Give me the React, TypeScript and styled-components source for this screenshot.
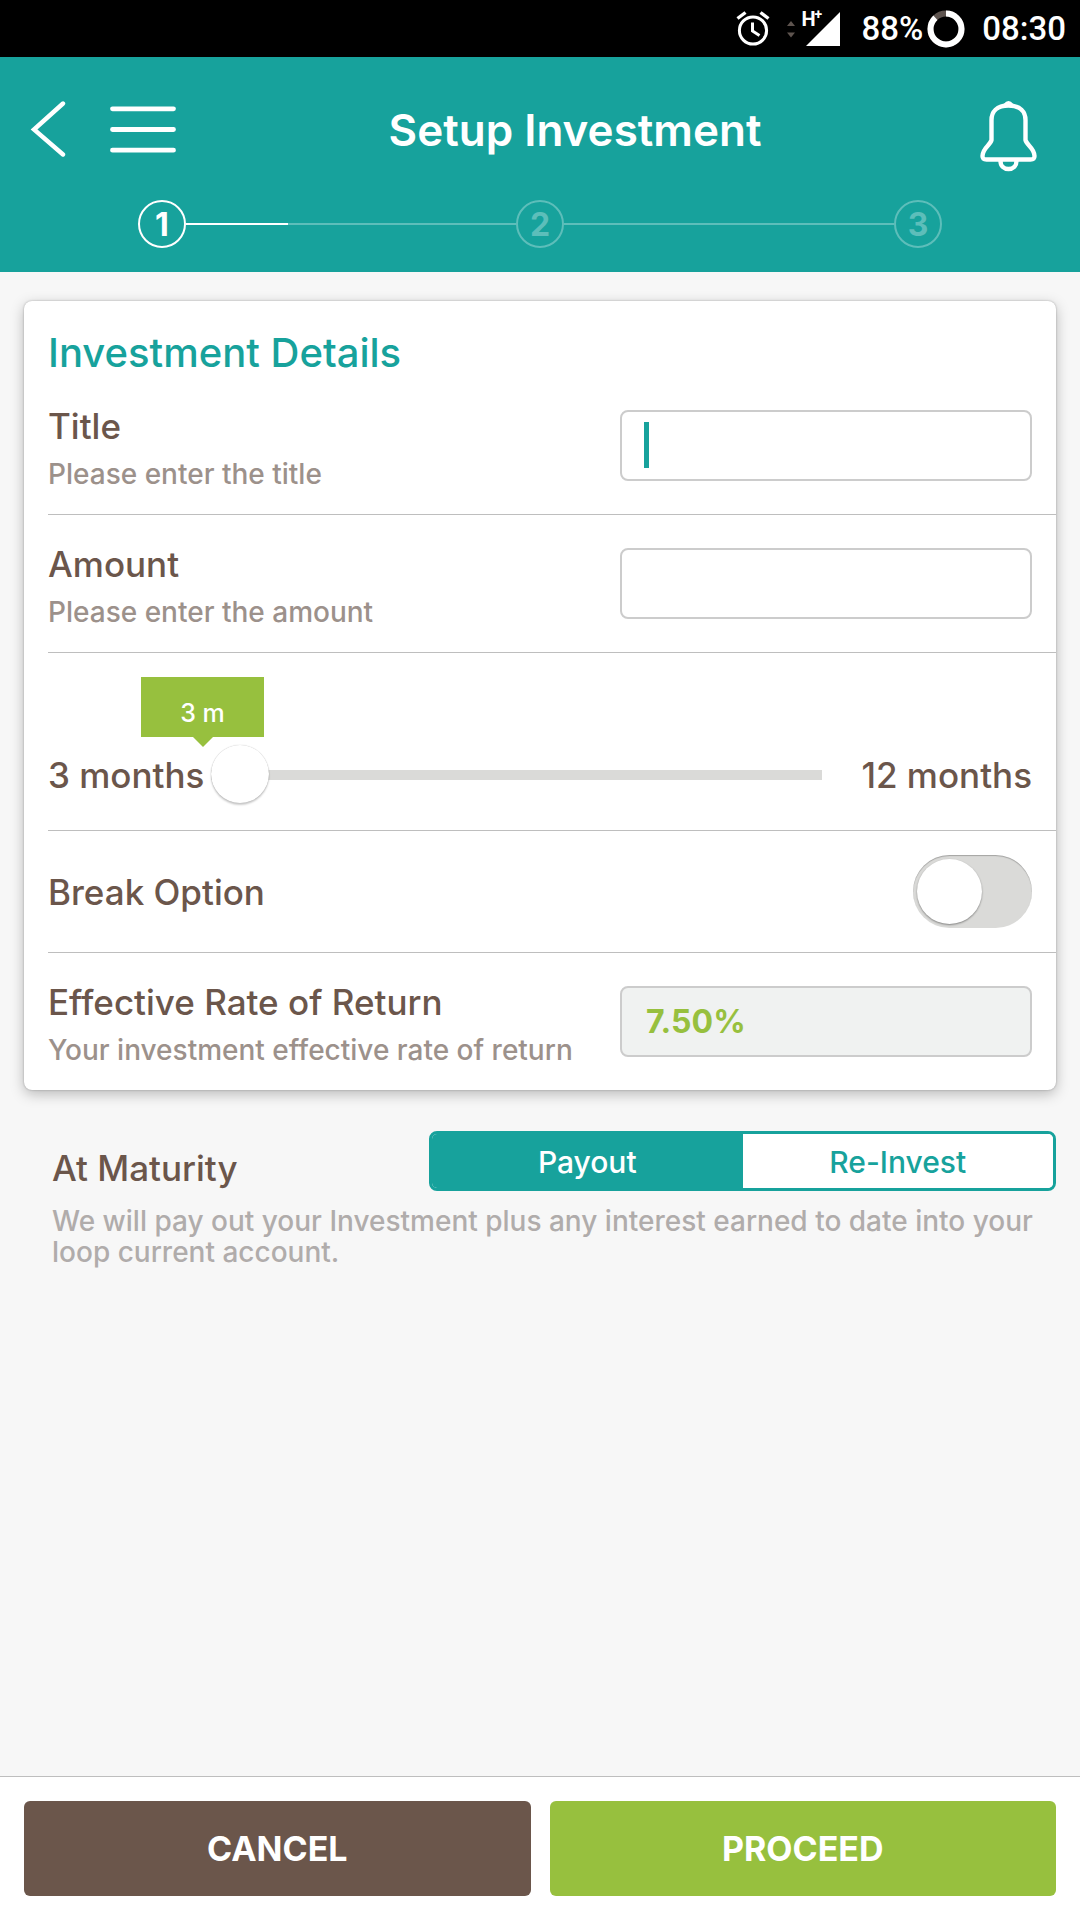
import React, { useState } from "react";
import styled, { createGlobalStyle } from "styled-components";

const teal = "#17a29c";
const green = "#97c03e";
const brown = "#6b564b";
const rule = "#bebebe";

const GlobalStyle = createGlobalStyle`
  *, *::before, *::after { box-sizing: border-box; }
  body { margin: 0; background: #f7f7f7; }
  body, button, input { font-family: Inter, "Liberation Sans", sans-serif; }
  button { border: 0; padding: 0; background: none; cursor: pointer; }
`;

const Page = styled.div`
  display: flex;
  flex-direction: column;
  min-height: 100vh;
  color: ${brown};
`;

const StatusBar = styled.div`
  display: flex;
  align-items: center;
  justify-content: flex-end;
  height: 57px;
  padding-right: 14px;
  background: #000;
  color: #fff;
  font: 500 33px/40px Roboto, sans-serif;
`;

const StatusIcon = styled.svg<{ $gap: number }>`
  display: block;
  flex: none;
  margin-right: ${(p) => p.$gap}px;
`;

const Signal = styled.div`
  position: relative;
  margin-right: 20px;
  svg { display: block; }
`;

const SignalType = styled.span`
  position: absolute;
  left: -4px;
  top: -2px;
  font: 700 20px/20px Roboto, sans-serif;
  sup { position: absolute; left: 13px; top: -4px; font-size: 14px; line-height: 18px; }
`;

const Battery = styled.span`
  margin-right: 4px;
`;

const Header = styled.header`
  background: ${teal};
  color: #fff;
  padding-bottom: 24px;
`;

const TitleBar = styled.div`
  display: flex;
  align-items: center;
  height: 143px;
  padding: 0 40px 0 30px;
`;

const IconButton = styled.button<{ $gap?: number; $drop?: number }>`
  flex: none;
  margin-right: ${(p) => p.$gap ?? 0}px;
  padding-top: ${(p) => p.$drop ?? 0}px;
  svg { display: block; fill: none; stroke: #fff; stroke-linecap: round; stroke-linejoin: round; }
`;

const PageTitle = styled.h1`
  flex: 1;
  margin: 0;
  padding-top: 2px;
  text-align: center;
  font-size: 44px;
  line-height: 52px;
  font-weight: 600;
`;

const Steps = styled.ol`
  display: flex;
  align-items: center;
  margin: 0;
  padding: 0 138px;
  list-style: none;
`;

const Step = styled.li<{ $active?: boolean }>`
  display: flex;
  align-items: center;
  justify-content: center;
  flex: none;
  width: 48px;
  height: 48px;
  padding-top: 2px;
  border: 2px solid currentColor;
  border-radius: 50%;
  color: ${(p) => (p.$active ? "#fff" : "#5dbeba")};
  font-size: 32px;
  line-height: 40px;
  font-weight: 700;
`;

const Connector = styled.li<{ $done?: number }>`
  flex: 1;
  height: 2px;
  background: #5dbeba;
  &::before {
    content: "";
    display: block;
    width: ${(p) => p.$done ?? 0}%;
    height: 2px;
    background: #fff;
  }
`;

const Main = styled.main`
  flex: 1;
  padding: 29px 24px;
`;

const Card = styled.section`
  padding: 28px 0 0 24px;
  background: #fff;
  border-radius: 8px;
  box-shadow: 0 0 2px rgba(0, 0, 0, 0.3), 0 4px 14px rgba(0, 0, 0, 0.26);
`;

const CardTitle = styled.h2`
  margin: 0;
  color: ${teal};
  font-size: 40px;
  line-height: 48px;
  font-weight: 500;
`;

const Row = styled.div<{ $height: number }>`
  display: flex;
  align-items: center;
  justify-content: space-between;
  min-height: ${(p) => p.$height}px;
  padding-right: 24px;
  border-bottom: 1px solid ${rule};
  &:last-child { border-bottom: 0; }
`;

const Texts = styled.div`
  padding-top: 8px;
`;

const Label = styled.label`
  display: block;
  font-size: 35px;
  line-height: 40px;
  font-weight: 500;
`;

const Hint = styled.p`
  margin: 8px 0 0;
  color: #9c918b;
  font-size: 28px;
  line-height: 40px;
  font-weight: 500;
`;

const Field = styled.div`
  position: relative;
  flex: none;
  width: 40%;
  min-width: 412px;
  max-width: 412px;
`;

const TextBox = styled.input`
  display: block;
  width: 100%;
  height: 71px;
  padding: 0 24px;
  border: 2px solid #ccc;
  border-radius: 8px;
  background: #fff;
  color: ${green};
  font-size: 32px;
  font-weight: 700;
  outline: 0;
  caret-color: ${teal};
  &:read-only { background: #f0f2f1; }
`;

const Caret = styled.span`
  position: absolute;
  left: 24px;
  top: 12px;
  width: 5px;
  height: 46px;
  background: ${teal};
`;

const SliderRow = styled(Row)`
  display: grid;
  grid-template-columns: 163px 1fr 210px;
  align-items: center;
  padding-top: 67px;
`;

const EndLabel = styled(Label)`
  text-align: right;
`;

const SliderBox = styled.div`
  position: relative;
`;

const Slider = styled.input`
  appearance: none;
  display: block;
  width: 100%;
  height: 60px;
  margin: 0;
  background: transparent;
  &::-webkit-slider-runnable-track { height: 10px; background: #dadad8; }
  &::-webkit-slider-thumb {
    appearance: none;
    width: 58px;
    height: 58px;
    margin-top: -25px;
    border-radius: 50%;
    background: #fff;
    box-shadow: 0 0 1px rgba(0, 0, 0, 0.3), 0 2px 2px rgba(0, 0, 0, 0.2);
  }
`;

const Bubble = styled.output`
  position: absolute;
  bottom: 68px;
  width: 123px;
  height: 60px;
  margin-left: -70px;
  padding-top: 12px;
  background: ${green};
  color: #fff;
  text-align: center;
  font-size: 25px;
  line-height: 48px;
  font-weight: 500;
  &::after {
    content: "";
    position: absolute;
    left: 50%;
    top: 100%;
    margin-left: -10px;
    border: 10px solid transparent;
    border-top-color: ${green};
    border-bottom: 0;
  }
`;

const Toggle = styled.input`
  appearance: none;
  width: 119px;
  height: 73px;
  margin: 0;
  padding: 4px;
  border-radius: 37px;
  background: #dadad8;
  box-shadow: inset 0 1px 1px rgba(0, 0, 0, 0.25);
  &::before {
    content: "";
    display: block;
    width: 65px;
    height: 65px;
    border-radius: 50%;
    background: #fff;
    box-shadow: 0 1px 2px rgba(0, 0, 0, 0.4);
  }
  &:checked { background: ${teal}; }
  &:checked::before { margin-left: auto; }
`;

const Maturity = styled.section`
  padding: 41px 0 0 28px;
`;

const MaturityHead = styled.div`
  display: flex;
  align-items: flex-end;
  justify-content: space-between;
`;

const MaturityTitle = styled.h3`
  margin: 0;
  font-size: 35px;
  line-height: 46px;
  font-weight: 500;
`;

const Segments = styled.div`
  display: flex;
  width: 627px;
  border: 3px solid ${teal};
  border-radius: 8px;
  background: #fff;
  overflow: hidden;
`;

const Segment = styled.button<{ $on: boolean }>`
  flex: 1;
  height: 54px;
  padding-top: 2px;
  background: ${(p) => (p.$on ? teal : "#fff")};
  color: ${(p) => (p.$on ? "#fff" : teal)};
  font-size: 30px;
  line-height: 40px;
  font-weight: 500;
`;

const MaturityNote = styled.p`
  margin: 15px 8px 0 0;
  color: #b0acab;
  font-size: 28px;
  line-height: 31px;
  font-weight: 500;
`;

const Footer = styled.footer`
  display: flex;
  gap: 19px;
  padding: 24px;
  border-top: 1px solid ${rule};
  background: #fff;
`;

const Action = styled.button<{ $color: string }>`
  flex: 1;
  height: 95px;
  border-radius: 6px;
  background: ${(p) => p.$color};
  color: #fff;
  font-size: 34px;
  line-height: 44px;
  font-weight: 700;
`;

const notes: Record<string, string> = {
  Payout:
    "We will pay out your Investment plus any interest earned to date into your loop current account.",
  "Re-Invest":
    "We will re-invest your Investment plus any interest earned to date.",
};

export default function App() {
  const [months, setMonths] = useState(3);
  const [maturity, setMaturity] = useState("Payout");
  const ratio = (months - 3) / 9;

  return (
    <Page>
      <GlobalStyle />
      <StatusBar>
        <StatusIcon $gap={17} width="34" height="36" viewBox="0 0 34 36" fill="none" stroke="#fff" strokeWidth="3">
          <circle cx="17" cy="19.5" r="13.6" />
          <path d="M16.5 11.500v8.500l7 4.500" />
          <path d="M1.500 7.500l8-6M32.500 7.500l-8-6" strokeWidth="3.400" />
        </StatusIcon>
        <StatusIcon $gap={10} width="8" height="36" viewBox="0 0 8 36" fill="#5e544f">
          <path d="M0 15l4-5 4 5zM0 21.500h8l-4 5z" />
        </StatusIcon>
        <Signal>
          <SignalType>H<sup>+</sup></SignalType>
          <svg width="36" height="36" viewBox="0 0 36 36">
            <path d="M35 1v34H1z" fill="#fff" />
          </svg>
        </Signal>
        <Battery>88%</Battery>
        <StatusIcon $gap={17} width="38" height="38" viewBox="0 0 38 38" fill="none" strokeWidth="6">
          <circle cx="19" cy="19" r="15.500" stroke="#5e544f" />
          <circle cx="19" cy="19" r="15.500" stroke="#fff" pathLength="100" strokeDasharray="88 12" transform="rotate(-90 19 19)" />
        </StatusIcon>
        <span>08:30</span>
      </StatusBar>

      <Header>
        <TitleBar>
          <IconButton $gap={42} aria-label="Back">
            <svg width="36" height="58" viewBox="0 0 36 58" strokeWidth="4.400">
              <path d="M33 3.500L4 29.500L33 54.500" strokeLinejoin="miter" />
            </svg>
          </IconButton>
          <IconButton aria-label="Menu">
            <svg width="70" height="50" viewBox="0 0 70 50" strokeWidth="4.800">
              <path d="M4.500 4.800h61M4.500 25.500h61M4.500 46.200h61" />
            </svg>
          </IconButton>
          <PageTitle>Setup Investment</PageTitle>
          <IconButton aria-label="Notifications" $drop={14}>
            <svg width="68" height="74" viewBox="0 0 68 74" strokeWidth="4.400">
              <path d="M36.500 6.500C24.500 6.500 19.500 13 19.500 21V41C18.500 46 10.500 49 10.500 57C10.500 60 12 60.500 14.500 60.500H58.500C61 60.500 62.500 60 62.500 57C62.500 49 54.500 46 53.500 41V21C53.500 13 48.500 6.500 36.500 6.500Z" />
              <path d="M28.500 62C28.500 67 32 70 36.500 70S44.500 67 44.500 62" />
              <path d="M32.500 5.500Q36.500 0.500 40.500 5.500Z" fill="#fff" strokeWidth="2" />
            </svg>
          </IconButton>
        </TitleBar>
        <Steps>
          <Step $active>1</Step>
          <Connector $done={31} aria-hidden />
          <Step>2</Step>
          <Connector aria-hidden />
          <Step>3</Step>
        </Steps>
      </Header>

      <Main>
        <Card>
          <CardTitle>Investment Details</CardTitle>
          <Row $height={138}>
            <Texts>
              <Label htmlFor="title">Title</Label>
              <Hint>Please enter the title</Hint>
            </Texts>
            <Field>
              <TextBox id="title" />
              <Caret />
            </Field>
          </Row>
          <Row $height={138}>
            <Texts>
              <Label htmlFor="amount">Amount</Label>
              <Hint>Please enter the amount</Hint>
            </Texts>
            <Field>
              <TextBox id="amount" inputMode="decimal" />
            </Field>
          </Row>
          <SliderRow $height={178}>
            <Label htmlFor="months">3 months</Label>
            <SliderBox>
              <Slider
                id="months"
                type="range"
                min={3}
                max={12}
                value={months}
                onChange={(e) => setMonths(Number(e.target.value))}
              />
              <Bubble htmlFor="months" style={{ left: `calc(${ratio} * (100% - 58px))` }}>
                {months} m
              </Bubble>
            </SliderBox>
            <EndLabel htmlFor="months">12 months</EndLabel>
          </SliderRow>
          <Row $height={122}>
            <Label htmlFor="break">Break Option</Label>
            <Toggle id="break" type="checkbox" role="switch" />
          </Row>
          <Row $height={137}>
            <Texts>
              <Label htmlFor="rate">Effective Rate of Return</Label>
              <Hint>Your investment effective rate of return</Hint>
            </Texts>
            <Field>
              <TextBox id="rate" value="7.50%" readOnly />
            </Field>
          </Row>
        </Card>

        <Maturity>
          <MaturityHead>
            <MaturityTitle>At Maturity</MaturityTitle>
            <Segments role="group" aria-label="At Maturity">
              {Object.keys(notes).map((name) => (
                <Segment
                  key={name}
                  $on={maturity === name}
                  aria-pressed={maturity === name}
                  onClick={() => setMaturity(name)}
                >
                  {name}
                </Segment>
              ))}
            </Segments>
          </MaturityHead>
          <MaturityNote>{notes[maturity]}</MaturityNote>
        </Maturity>
      </Main>

      <Footer>
        <Action $color={brown}>CANCEL</Action>
        <Action $color={green}>PROCEED</Action>
      </Footer>
    </Page>
  );
}
